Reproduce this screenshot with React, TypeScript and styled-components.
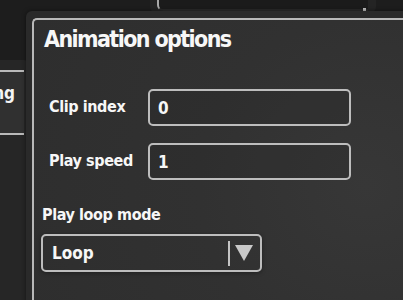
import React from 'react';
import styled, { createGlobalStyle } from 'styled-components';

const GlobalStyle = createGlobalStyle`
    html, body {
        margin: 0;
        padding: 0;
        background: #1c1c1c;
        overflow: hidden;
    }
    body {
        font-family: "DejaVu Sans Condensed", "DejaVu Sans", sans-serif;
    }
`;

const Desktop = styled.div`
    position: relative;
    width: 403px;
    height: 300px;
    overflow: hidden;
    background: #1d1d1d;
`;

// windows lying behind the main one, only their edges are on screen
const SideWindow = styled.div`
    position: absolute;
    left: -40px;
    top: 60px;
    width: 68px;
    height: 260px;
    background: #262626;
    border-radius: 4px;
    padding: 10px 4px 0 0;
    box-sizing: border-box;
`;

const SideTab = styled.div`
    border-top: 2px solid #b9b9b9;
    border-bottom: 2px solid #b9b9b9;
    background: #303030;
    height: 65px;
    display: flex;
    align-items: flex-start;
    justify-content: flex-end;
    padding: 11px 9px 0 0;
    box-sizing: border-box;
    color: #f4f4f4;
    font-weight: bold;
    font-size: 17px;
    line-height: 20px;
`;

const TopWindow = styled.div`
    position: absolute;
    left: 150px;
    top: -20px;
    width: 226px;
    height: 32px;
    background: #242424;
    border-radius: 5px;
    padding: 0 8px 0 7px;
    box-sizing: border-box;
`;

const TopWindowInner = styled.div`
    height: 29px;
    border-left: 2px solid #a9a9a9;
    border-bottom: 2px solid #2a2a2a;
    border-radius: 0 0 0 6px;
    background: #1b1b1b;
    position: relative;
    &::after {
        content: '';
        position: absolute;
        right: 2px;
        bottom: -2px;
        width: 3px;
        height: 3px;
        background: #bcbcbc;
    }
`;

const Window = styled.div`
    position: absolute;
    left: 26px;
    top: 11px;
    width: 400px;
    height: 310px;
    background: #2a2a2a;
    border-radius: 6px;
    padding: 7px 0 0 6px;
    box-sizing: border-box;
    box-shadow: 0 0 4px rgba(0, 0, 0, 0.5);
`;

const Panel = styled.div`
    height: 100%;
    border: 2px solid #b8b8b8;
    border-right: none;
    border-bottom: none;
    border-radius: 5px 0 0 0;
    background: radial-gradient(circle at 85% 55%, #373737 0%, #313131 45%, #2e2e2e 100%);
    padding: 6px 0 0 10px;
    box-sizing: border-box;
    color: #f7f7f7;
`;

const Title = styled.h1`
    margin: 0 0 36px 0;
    font-size: 23px;
    line-height: 27px;
    font-weight: bold;
    letter-spacing: -1.6px;
`;

const FieldRow = styled.div<{ $gap?: number }>`
    display: grid;
    grid-template-columns: 99px 203px;
    align-items: center;
    padding-left: 5px;
    margin-bottom: ${(p) => p.$gap ?? 17}px;
`;

const Label = styled.label`
    font-size: 16px;
    font-weight: bold;
    letter-spacing: -0.4px;
    white-space: nowrap;
    margin-top: -3px;
`;

const TextBox = styled.div`
    height: 37px;
    border: 2px solid #bdbdbd;
    border-radius: 5px;
    box-sizing: border-box;
    display: flex;
    align-items: center;
    padding-left: 8px;
    font-size: 17px;
    font-weight: bold;
    background: rgba(0, 0, 0, 0.06);
`;

const SectionLabel = styled.div`
    font-size: 16px;
    font-weight: bold;
    letter-spacing: -0.4px;
    margin: 0 0 10px -2px;
`;

const Select = styled.div`
    width: 221px;
    height: 38px;
    margin-left: -3px;
    border: 2px solid #bdbdbd;
    border-radius: 5px;
    box-sizing: border-box;
    display: flex;
    align-items: center;
    padding: 0 7px 0 9px;
    font-size: 17px;
    font-weight: bold;
    box-shadow: 0 1px 4px rgba(0, 0, 0, 0.35);
`;

const SelectValue = styled.span`
    flex: 1;
`;

const Divider = styled.span`
    width: 2px;
    height: 25px;
    background: #c4c4c4;
    margin-right: 5px;
`;

const Arrow = styled.span`
    width: 0;
    height: 0;
    border-left: 9px solid transparent;
    border-right: 9px solid transparent;
    border-top: 16px solid #c8c8c8;
`;

export default function App() {
    return <Desktop>
        <GlobalStyle />
        <SideWindow>
            <SideTab>ng</SideTab>
        </SideWindow>
        <TopWindow>
            <TopWindowInner />
        </TopWindow>
        <Window>
            <Panel>
                <Title>Animation options</Title>
                <FieldRow>
                    <Label>Clip index</Label>
                    <TextBox>0</TextBox>
                </FieldRow>
                <FieldRow $gap={25}>
                    <Label>Play speed</Label>
                    <TextBox>1</TextBox>
                </FieldRow>
                <SectionLabel>Play loop mode</SectionLabel>
                <Select>
                    <SelectValue>Loop</SelectValue>
                    <Divider />
                    <Arrow />
                </Select>
            </Panel>
        </Window>
    </Desktop>
}
